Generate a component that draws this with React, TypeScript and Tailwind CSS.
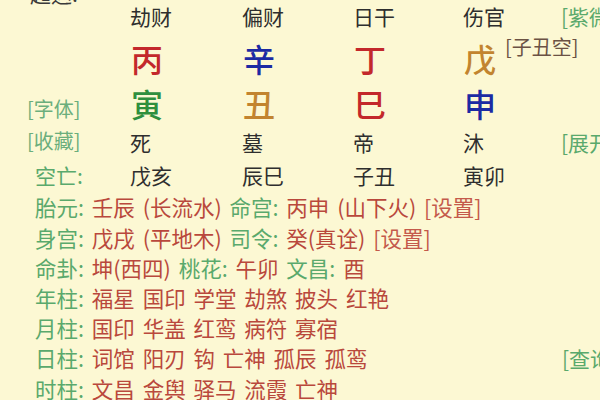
import React from 'react';

type Cell = { text: string; color: string };

const shishen = ['劫财', '偏财', '日干', '伤官'];

const tiangan: Cell[] = [
  { text: '丙', color: 'text-[#c3282b]' },
  { text: '辛', color: 'text-[#1c2aa3]' },
  { text: '丁', color: 'text-[#c3282b]' },
  { text: '戊', color: 'text-[#c2842f]' },
];

const dizhi: Cell[] = [
  { text: '寅', color: 'text-[#2f8f3e]' },
  { text: '丑', color: 'text-[#c2842f]' },
  { text: '巳', color: 'text-[#c3282b]' },
  { text: '申', color: 'text-[#1c2aa3]' },
];

const changsheng = ['死', '墓', '帝', '沐'];
const kongwang = ['戊亥', '辰巳', '子丑', '寅卯'];

const shensha: { label: string; items: string[]; h: string }[] = [
  { label: '年柱', items: ['福星', '国印', '学堂', '劫煞', '披头', '红艳'], h: 'h-[30px]' },
  { label: '月柱', items: ['国印', '华盖', '红鸾', '病符', '寡宿'], h: 'h-[30px]' },
  { label: '日柱', items: ['词馆', '阳刃', '钩', '亡神', '孤辰', '孤鸾'], h: 'h-[31px]' },
  { label: '时柱', items: ['文昌', '金舆', '驿马', '流霞', '亡神'], h: 'h-[30px]' },
];

const green = 'text-[#5aa96c]';
const red = 'text-[#b9483c]';

// four pillar columns share the same widths on every row
const cols = ['w-[112px]', 'w-[111px]', 'w-[110px]', 'w-[97px]'];

function PillarRow({
  left,
  right,
  h,
  children,
}: {
  left?: React.ReactNode;
  right?: React.ReactNode;
  h: string;
  children: React.ReactNode;
}) {
  return (
    <div className={`flex items-start ${h}`}>
      <div className="w-[130px] shrink-0 pl-[27px] leading-[30px]">{left}</div>
      {children}
      <div className="shrink-0 pl-[1px] leading-[30px] whitespace-nowrap">{right}</div>
    </div>
  );
}

export default function App() {
  return (
    <div className="w-[600px] h-[400px] overflow-hidden bg-[#fcf8d3] text-[21px] text-[#2e2e2e] font-['Noto_Sans_CJK_SC',sans-serif]">
      {/* row cut off at the top edge */}
      <div className="-mt-[22px] h-[23px] pl-[30px] leading-[30px] text-[#3a3a3a]">起运:</div>

      <PillarRow h="h-[42px]" right={<span className={green}>[紫微</span>}>
        {shishen.map((s, i) => (
          <div key={s} className={`${cols[i]} shrink-0 leading-[30px]`}>{s}</div>
        ))}
      </PillarRow>

      <PillarRow h="h-[45px]">
        {tiangan.map((c, i) => (
          <div key={c.text} className={`${cols[i]} shrink-0 flex items-start leading-[30px]`}>
            <span className={`pl-[1px] text-[32px] font-medium ${c.color}`}>{c.text}</span>
            {i === 3 && (
              <span className="relative -top-[11px] ml-[9px] text-[20px] text-[#6b5244] whitespace-nowrap">[子丑空]</span>
            )}
          </div>
        ))}
      </PillarRow>

      <PillarRow
        h="h-[39px]"
        left={<span className="relative top-[5px] text-[20px] text-[#6bae7c]">[字体]</span>}
      >
        {dizhi.map((c, i) => (
          <div key={c.text} className={`${cols[i]} shrink-0 leading-[30px]`}>
            <span className={`pl-[1px] text-[32px] font-medium ${c.color}`}>{c.text}</span>
          </div>
        ))}
      </PillarRow>

      <PillarRow
        h="h-[33px]"
        left={<span className="relative -top-[2px] text-[20px] text-[#6bae7c]">[收藏]</span>}
        right={<span className={green}>[展开</span>}
      >
        {changsheng.map((s, i) => (
          <div key={s} className={`${cols[i]} shrink-0 leading-[30px]`}>{s}</div>
        ))}
      </PillarRow>

      <PillarRow h="h-[32px]" left={<span className={`pl-[8px] ${green}`}>空亡:</span>}>
        {kongwang.map((s, i) => (
          <div key={s} className={`${cols[i]} shrink-0 leading-[30px]`}>{s}</div>
        ))}
      </PillarRow>

      <div className="pl-[35px] text-[21.5px] whitespace-nowrap [word-spacing:3px]">
        <div className="h-[31px] leading-[30px]">
          <span className={green}>胎元:</span> <span className={red}>壬辰 (长流水)</span>{' '}
          <span className={green}>命宫:</span> <span className={red}>丙申 (山下火)</span>{' '}
          <span className="text-[#c45a4b]">[设置]</span>
        </div>
        <div className="h-[30px] leading-[30px]">
          <span className={green}>身宫:</span> <span className={red}>戊戌 (平地木)</span>{' '}
          <span className={green}>司令:</span> <span className={red}>癸(真诠)</span>{' '}
          <span className="text-[#c45a4b]">[设置]</span>
        </div>
        <div className="h-[30px] leading-[30px]">
          <span className={green}>命卦:</span> <span className={red}>坤(西四)</span>{' '}
          <span className={green}>桃花:</span> <span className={red}>午卯</span>{' '}
          <span className={green}>文昌:</span> <span className={red}>酉</span>
        </div>
        {shensha.map((r) => (
          <div key={r.label} className={`${r.h} leading-[30px] flex`}>
            <div className="w-[527px] shrink-0">
              <span className={green}>{r.label}:</span>{' '}
              <span className={red}>{r.items.join(' ')}</span>
            </div>
            {r.label === '日柱' && <span className={`text-[21px] ${green}`}>[查询</span>}
          </div>
        ))}
      </div>
    </div>
  );
}
